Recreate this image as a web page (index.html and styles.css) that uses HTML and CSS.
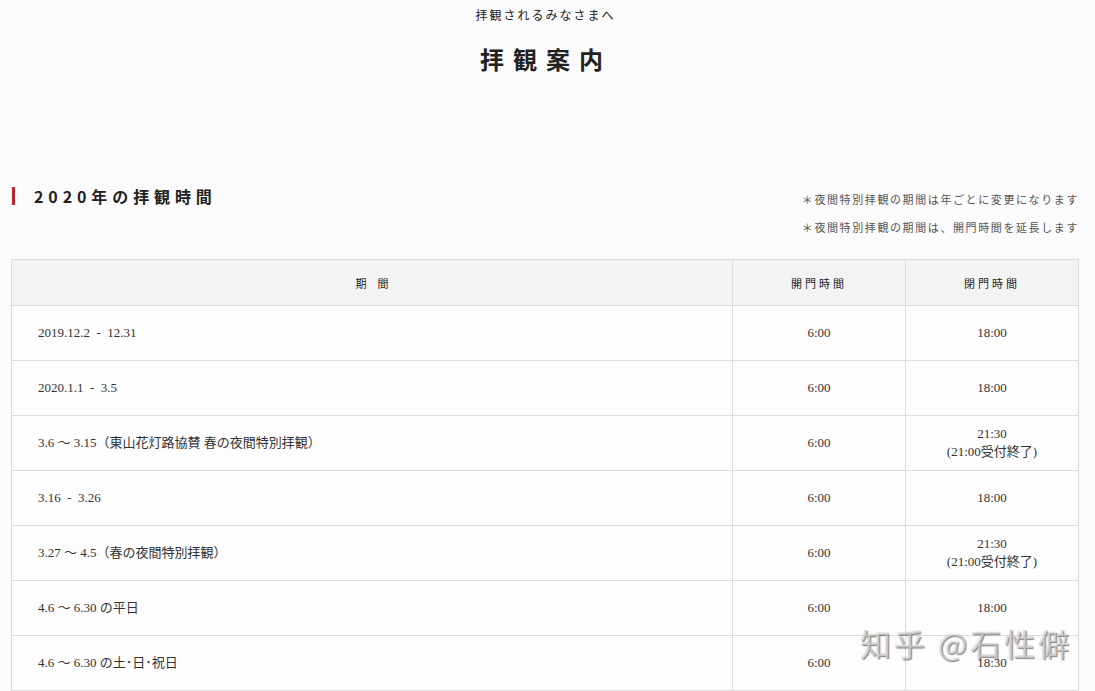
FILE: index.html
```html
<!doctype html>
<html lang="ja">
  <head>
    <meta charset="UTF-8" />
    <meta name="viewport" content="width=device-width, initial-scale=1.0">
    <title>拝観案内</title>
    <link rel="stylesheet" href="styles.css">
  </head>
  <body>
    <div class="page-head">
      <p class="sub">拝観されるみなさまへ</p>
      <h1>拝観案内</h1>
    </div>

    <div class="section-head">
      <h2>2020年の拝観時間</h2>
      <div class="notes">
        <p>＊夜間特別拝観の期間は年ごとに変更になります</p>
        <p>＊夜間特別拝観の期間は、開門時間を延長します</p>
      </div>
    </div>

    <table class="hours">
      <thead>
        <tr>
          <th class="col-p">期　間</th>
          <th class="col-o">開門時間</th>
          <th class="col-c">閉門時間</th>
        </tr>
      </thead>
      <tbody>
        <tr>
          <td>2019.12.2&ensp;-&ensp;12.31</td>
          <td>6:00</td>
          <td>18:00</td>
        </tr>
        <tr>
          <td>2020.1.1&ensp;-&ensp;3.5</td>
          <td>6:00</td>
          <td>18:00</td>
        </tr>
        <tr>
          <td>3.6 ～ 3.15（東山花灯路協賛 春の夜間特別拝観）</td>
          <td>6:00</td>
          <td>21:30<br>(21:00受付終了)</td>
        </tr>
        <tr>
          <td>3.16&ensp;-&ensp;3.26</td>
          <td>6:00</td>
          <td>18:00</td>
        </tr>
        <tr>
          <td>3.27 ～ 4.5（春の夜間特別拝観）</td>
          <td>6:00</td>
          <td>21:30<br>(21:00受付終了)</td>
        </tr>
        <tr>
          <td>4.6 ～ 6.30 の平日</td>
          <td>6:00</td>
          <td>18:00</td>
        </tr>
        <tr>
          <td>4.6 ～ 6.30 の土･日･祝日</td>
          <td>6:00</td>
          <td>18:30</td>
        </tr>
      </tbody>
    </table>

    <div class="watermark">知乎 @石性僻</div>
  </body>
</html>
```

FILE: styles.css
```css
body {
  margin: 0;
  background-color: #fbfbfb;
  color: #222;
  font-family: "Liberation Serif", "Noto Sans CJK JP", serif;
  height: 691px;
  overflow: hidden;
  position: relative;
}
p {
  margin: 0;
}
.page-head {
  text-align: center;
  padding-top: 7px;
}
.sub {
  font-family: "Noto Sans CJK JP", sans-serif;
  font-size: 12px;
  line-height: 16px;
  letter-spacing: 2px;
  padding-right: 4px;
}
h1 {
  margin: 23px 0 0;
  font-family: "Noto Sans CJK JP", sans-serif;
  font-size: 24px;
  line-height: 26px;
  font-weight: 700;
  letter-spacing: 9px;
  padding-right: 3px;
}
.section-head {
  display: flex;
  justify-content: space-between;
  align-items: flex-start;
  margin: 112px 16px 0 12px;
  height: 75px;
}
h2 {
  margin: 3px 0 0;
  border-left: 3px solid #b3262d;
  padding-left: 19px;
  font-family: "Noto Sans CJK JP", sans-serif;
  font-size: 16px;
  line-height: 18px;
  font-weight: 700;
  letter-spacing: 4.9px;
}
.notes {
  text-align: right;
  font-family: "Noto Sans CJK JP", sans-serif;
  font-size: 11px;
  line-height: 28px;
  letter-spacing: 1.6px;
  color: #555;
  padding-top: 1px;
}
.hours {
  margin-left: 11px;
  width: 1068px;
  border-collapse: collapse;
  background-color: #fdfdfd;
  font-size: 13px;
}
.hours th,
.hours td {
  border: 1px solid #dcdcdc;
  text-align: center;
  padding: 0;
}
.hours th {
  height: 45px;
  background-color: #f3f3f3;
  font-family: "Noto Sans CJK JP", sans-serif;
  font-size: 11px;
  font-weight: 400;
  letter-spacing: 3px;
}
.hours th.col-p {
  letter-spacing: 0;
}
.hours th.col-o {
  width: 172px;
}
.hours th.col-c {
  width: 172px;
}
.hours td {
  height: 54px;
  line-height: 18px;
  color: #333;
}
.hours td:first-child {
  text-align: left;
  padding-left: 26px;
}
.watermark {
  position: absolute;
  left: 860px;
  top: 620px;
  font-family: "Noto Sans CJK SC", sans-serif;
  font-size: 31px;
  letter-spacing: 3px;
  color: rgba(255, 255, 255, 0.6);
  text-shadow: 1px 1px 1px rgba(0, 0, 0, 0.45), 0 0 1px rgba(0, 0, 0, 0.3);
}
```
